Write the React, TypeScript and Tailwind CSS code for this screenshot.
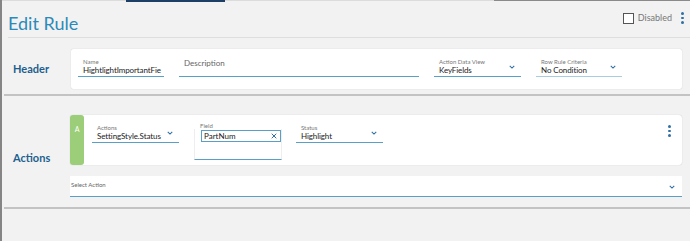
import { X } from 'lucide-react';

const Chevron = ({ className = '' }: { className?: string }) => (
  <svg viewBox="0 0 8 5" className={`w-[6px] h-[4px] shrink-0 ${className}`}>
    <path d="M1 1l3 3 3-3" fill="none" stroke="#2f6fa3" strokeWidth="1.4" />
  </svg>
);

const Kebab = () => (
  <div className="flex flex-col gap-[2px] items-center w-[3px]">
    <span className="w-[2.5px] h-[2.5px] rounded-full bg-[#2f6fa3]" />
    <span className="w-[2.5px] h-[2.5px] rounded-full bg-[#2f6fa3]" />
    <span className="w-[2.5px] h-[2.5px] rounded-full bg-[#2f6fa3]" />
  </div>
);

const SelectField = ({ label, value, width, light, noChevron }: { label: string; value: string; width: string; light?: boolean; noChevron?: boolean }) => (
  <div className={`${width} flex flex-col border-b-[1.5px] ${light ? 'border-[#a9cde0]' : 'border-[#5a9fc6]'} pl-[5px] pr-[6px] pb-[1px]`}>
    <span className="text-[6px] leading-[7px] text-[#777]">{label}</span>
    <div className="flex items-center justify-between">
      <span className="text-[8px] leading-[10px] text-[#222] tracking-[-0.1px] whitespace-nowrap">{value}</span>
      {!noChevron && <Chevron className="-mt-[6px]" />}
    </div>
  </div>
);

export default function App() {
  return (
    <div className="w-[690px] h-[241px] bg-[#f2f2f2] border-l-2 border-[#858585] flex flex-col font-['Lato',sans-serif] overflow-hidden">
      {/* --- tab strip --- */}
      <div className="flex h-[3px] items-start">
        <div className="w-[124px] h-px bg-[#dcdcdc]" />
        <div className="w-[99px] h-[2px] bg-[#1d3f66]" />
        <div className="w-[269px] h-px bg-[#dcdcdc]" />
        <div className="flex-1 h-px bg-[#8a8a8a]" />
      </div>

      {/* --- title row --- */}
      <div className="flex items-center justify-between h-[34px] pl-[6px] pr-[6px]">
        <h1 className="text-[18px] leading-none text-[#2b8ab9] mt-[6px]">Edit Rule</h1>
        <div className="flex items-center gap-[3px] -mt-[4px]">
          <span className="w-[11px] h-[11px] border-[1.5px] border-[#555] bg-white" />
          <span className="text-[9px] text-[#777] ml-[1px] mr-[6px]">Disabled</span>
          <Kebab />
        </div>
      </div>
      <div className="ml-[6px] h-px bg-[#dedede]" />

      {/* --- Header section --- */}
      <div className="flex mt-[11px]">
        <div className="w-[69px] flex items-center pl-[11px]">
          <span className="text-[11px] font-bold text-[#1d5f8e]">Header</span>
        </div>
        <div className="flex-1 mr-[8px] h-[40px] bg-white rounded-[2px] shadow-[0_0_1px_rgba(0,0,0,0.25)] flex items-end pb-[12px] pl-[7px] gap-[15px]">
          <SelectField label="Name" value="HightlightImportantFie" width="w-[86px]" noChevron />
          <div className="w-[240px] border-b-[1.5px] border-[#5a9fc6] pl-[5px] pb-[4px]">
            <span className="text-[8px] text-[#666]">Description</span>
          </div>
          <SelectField label="Action Data View" value="KeyFields" width="w-[87px]" />
          <SelectField label="Row Rule Criteria" value="No Condition" width="w-[86px]" light />
        </div>
      </div>
      <div className="mt-[5px] ml-[2px] h-[2px] bg-[#c3c3c3]" />

      {/* --- Actions section --- */}
      <div className="flex mt-[19px]">
        <div className="w-[68px] flex items-center pl-[11px] pt-[4px]">
          <span className="text-[11px] font-bold text-[#1d5f8e]">Actions</span>
        </div>
        <div className="flex-1 mr-[8px] flex flex-col gap-[11px]">
          <div className="h-[50px] bg-white rounded-[3px] shadow-[0_0_1px_rgba(0,0,0,0.25)] flex">
            <div className="w-[14px] bg-[#9ccd78] rounded-[3px] flex justify-center pt-[11px]">
              <span className="text-[7px] text-white leading-none">A</span>
            </div>
            <div className="flex flex-1 items-start pt-[9px] pl-[8px]">
              <SelectField label="Actions" value="SettingStyle.Status" width="w-[87px]" />
              <div className="ml-[15px] w-[88px] -mt-[2px] flex flex-col">
                <span className="text-[6px] leading-[7px] text-[#777] pl-[6px]">Field</span>
                <div className="h-[31px] bg-white border-x border-[#eee] border-b-[1.5px] border-b-[#5a9fc6] pl-[6px] pt-[1px]">
                  <div className="h-[12px] border border-[#5a9fc6] flex items-center justify-between px-[2px]">
                    <span className="text-[8px] leading-none text-[#222]">PartNum</span>
                    <X size={8} strokeWidth={3} className="text-[#2f6fa3]" />
                  </div>
                </div>
              </div>
              <div className="ml-[14px]">
                <SelectField label="Status" value="Highlight" width="w-[87px]" />
              </div>
              <div className="ml-auto mr-[11px] pt-[1px]">
                <Kebab />
              </div>
            </div>
          </div>
          <div className="h-[21px] bg-white border-b-[1.5px] border-[#5a9fc6] flex justify-between pl-[1px] pr-[7px]">
            <span className="text-[6px] text-[#666] pt-[4px]">Select Action</span>
            <Chevron className="mt-[9px]" />
          </div>
        </div>
      </div>
      <div className="mt-[10px] ml-[2px] h-[2px] bg-[#c3c3c3]" />
    </div>
  );
}
